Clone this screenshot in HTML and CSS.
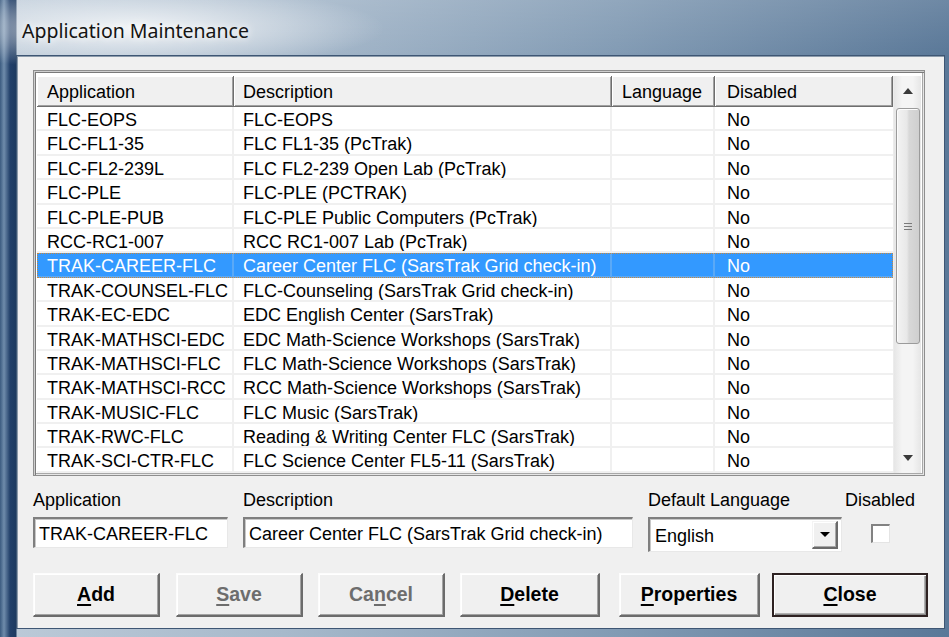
FILE: index.html
```html
<!DOCTYPE html>
<html lang="en">
<head>
<meta charset="utf-8">
<title>Application Maintenance</title>
<link rel="stylesheet" href="styles.css">
</head>
<body>
<div class="window">
  <div class="titlebar"><span class="title">Application Maintenance</span></div>
  <div class="client">
    <div class="listview">
      <div class="lv-main">
        <div class="lv-header">
          <div class="hcell c-app">Application</div>
          <div class="hcell c-desc">Description</div>
          <div class="hcell c-lang">Language</div>
          <div class="hcell c-dis">Disabled</div>
        </div>
        <div class="lv-rows">
          <div class="row"><div class="cell c-app">FLC-EOPS</div><div class="cell c-desc">FLC-EOPS</div><div class="cell c-lang"></div><div class="cell c-dis">No</div></div>
          <div class="row"><div class="cell c-app">FLC-FL1-35</div><div class="cell c-desc">FLC FL1-35 (PcTrak)</div><div class="cell c-lang"></div><div class="cell c-dis">No</div></div>
          <div class="row"><div class="cell c-app">FLC-FL2-239L</div><div class="cell c-desc">FLC FL2-239 Open Lab (PcTrak)</div><div class="cell c-lang"></div><div class="cell c-dis">No</div></div>
          <div class="row"><div class="cell c-app">FLC-PLE</div><div class="cell c-desc">FLC-PLE (PCTRAK)</div><div class="cell c-lang"></div><div class="cell c-dis">No</div></div>
          <div class="row"><div class="cell c-app">FLC-PLE-PUB</div><div class="cell c-desc">FLC-PLE Public Computers (PcTrak)</div><div class="cell c-lang"></div><div class="cell c-dis">No</div></div>
          <div class="row"><div class="cell c-app">RCC-RC1-007</div><div class="cell c-desc">RCC RC1-007 Lab (PcTrak)</div><div class="cell c-lang"></div><div class="cell c-dis">No</div></div>
          <div class="row selected"><div class="cell c-app">TRAK-CAREER-FLC</div><div class="cell c-desc">Career Center FLC (SarsTrak Grid check-in)</div><div class="cell c-lang"></div><div class="cell c-dis">No</div></div>
          <div class="row"><div class="cell c-app">TRAK-COUNSEL-FLC</div><div class="cell c-desc">FLC-Counseling (SarsTrak Grid check-in)</div><div class="cell c-lang"></div><div class="cell c-dis">No</div></div>
          <div class="row"><div class="cell c-app">TRAK-EC-EDC</div><div class="cell c-desc">EDC English Center (SarsTrak)</div><div class="cell c-lang"></div><div class="cell c-dis">No</div></div>
          <div class="row"><div class="cell c-app">TRAK-MATHSCI-EDC</div><div class="cell c-desc">EDC Math-Science Workshops (SarsTrak)</div><div class="cell c-lang"></div><div class="cell c-dis">No</div></div>
          <div class="row"><div class="cell c-app">TRAK-MATHSCI-FLC</div><div class="cell c-desc">FLC Math-Science Workshops (SarsTrak)</div><div class="cell c-lang"></div><div class="cell c-dis">No</div></div>
          <div class="row"><div class="cell c-app">TRAK-MATHSCI-RCC</div><div class="cell c-desc">RCC Math-Science Workshops (SarsTrak)</div><div class="cell c-lang"></div><div class="cell c-dis">No</div></div>
          <div class="row"><div class="cell c-app">TRAK-MUSIC-FLC</div><div class="cell c-desc">FLC Music (SarsTrak)</div><div class="cell c-lang"></div><div class="cell c-dis">No</div></div>
          <div class="row"><div class="cell c-app">TRAK-RWC-FLC</div><div class="cell c-desc">Reading &amp; Writing Center FLC (SarsTrak)</div><div class="cell c-lang"></div><div class="cell c-dis">No</div></div>
          <div class="row"><div class="cell c-app">TRAK-SCI-CTR-FLC</div><div class="cell c-desc">FLC Science Center FL5-11 (SarsTrak)</div><div class="cell c-lang"></div><div class="cell c-dis">No</div></div>
        </div>
      </div>
      <div class="vscroll">
        <div class="sb-arrow"><svg width="10" height="6" viewBox="0 0 10 6"><path d="M0 6 L5 0 L10 6 Z" fill="#3a3a3a"/></svg></div>
        <div class="sb-track">
          <div class="sb-thumb">
            <svg width="8" height="7" viewBox="0 0 8 7"><path d="M0 0.5H8M0 3.5H8M0 6.5H8" stroke="#7a7a7a" stroke-width="1"/></svg>
          </div>
        </div>
        <div class="sb-arrow"><svg width="10" height="6" viewBox="0 0 10 6"><path d="M0 0 L10 0 L5 6 Z" fill="#3a3a3a"/></svg></div>
      </div>
    </div>

    <div class="editor">
      <div class="field f-app">
        <div class="label">Application</div>
        <div class="textbox">TRAK-CAREER-FLC</div>
      </div>
      <div class="field f-desc">
        <div class="label">Description</div>
        <div class="textbox">Career Center FLC (SarsTrak Grid check-in)</div>
      </div>
      <div class="field f-lang">
        <div class="label">Default Language</div>
        <div class="combo">
          <span class="combo-text">English</span>
          <span class="combo-btn"><svg width="10" height="5" viewBox="0 0 10 5"><path d="M0 0 L10 0 L5 5 Z" fill="#000"/></svg></span>
        </div>
      </div>
      <div class="field f-dis">
        <div class="label">Disabled</div>
        <div class="checkbox"></div>
      </div>
    </div>

    <div class="buttons">
      <div class="btn b-add"><u>A</u>dd</div>
      <div class="btn b-save disabled"><u>S</u>ave</div>
      <div class="btn b-cancel disabled">Ca<u>n</u>cel</div>
      <div class="btn b-delete"><u>D</u>elete</div>
      <div class="btn b-props"><u>P</u>roperties</div>
      <div class="btn b-close default"><u>C</u>lose</div>
    </div>
  </div>
</div>
</body>
</html>
```

FILE: styles.css
```css
* { box-sizing: border-box; }

html, body {
  margin: 0;
  padding: 0;
}

body {
  width: 949px;
  height: 637px;
  overflow: hidden;
  background: #27466b;
  font-family: "Liberation Sans", Arial, sans-serif;
  font-size: 18px;
  color: #000;
}

/* Aero glass window frame */
.window {
  width: 949px;
  height: 637px;
  display: flex;
  flex-direction: column;
  background:
    radial-gradient(ellipse 250px 42px at 135px 28px, rgba(255,255,255,0.8), rgba(255,255,255,0) 100%),
    linear-gradient(90deg, #3b5b80 0px, #6f8cab 4px, #22406a 10px, #1d3a60 16px, rgba(0,0,0,0) 17px),
    linear-gradient(180deg, rgba(255,255,255,0.12), rgba(255,255,255,0) 55px),
    linear-gradient(90deg, #bccad8 0%, #a7b9cb 30%, #829bb4 65%, #5a7898 100%);
}

.titlebar {
  height: 55px;
  flex: none;
  padding: 17px 0 0 22px;
}

.title {
  font-family: "Noto Sans", "Open Sans", sans-serif;
  font-size: 19.5px;
  color: #141414;
  text-shadow: 0 0 6px rgba(255,255,255,0.9), 0 0 12px rgba(255,255,255,0.8);
}

.client {
  flex: 1;
  margin: 0 4px 8px 16px;
  background: #f0f0f0;
  border: 1px solid #3e5674;
  box-shadow: inset 1px 1px 0 #8c9bab;
  padding: 14px 0 0 16px;
  display: flex;
  flex-direction: column;
}

/* ---------- list view ---------- */
.listview {
  width: 892px;
  height: 406px;
  display: flex;
  background: #fff;
  border: 1px solid #8e8e8e;
  box-shadow: inset 1px 1px 0 #cfcfcf, inset 2px 2px 0 #7a7a7a, inset -1px -1px 0 #e6e6e6, inset -2px -2px 0 #a8a8a8;
  padding: 5px 3px 2px 3px;
}

.lv-main {
  width: 856px;
  display: flex;
  flex-direction: column;
}

.lv-header {
  display: flex;
  height: 31px;
  flex: none;
}

.hcell {
  height: 31px;
  background: #f0f0f0;
  border-right: 1px solid #6e6e6e;
  border-bottom: 1px solid #6e6e6e;
  box-shadow: inset 1px 1px 0 #fff, inset -1px -1px 0 #a0a0a0;
  line-height: 30px;
  padding-top: 1px;
  white-space: nowrap;
  overflow: hidden;
}

.c-app  { width: 197px; padding-left: 10px; }
.c-desc { width: 378px; padding-left: 9px; }
.c-lang { width: 103px; padding-left: 10px; }
.c-dis  { width: 178px; padding-left: 12px; }

.lv-rows {
  display: flex;
  flex-direction: column;
}

.row {
  display: flex;
  height: 24.4px;
}

.cell {
  height: 24.4px;
  line-height: 24px;
  padding-top: 1px;
  white-space: nowrap;
  overflow: hidden;
  border-right: 2px solid #f0f0f0;
  border-bottom: 2px solid #f0f0f0;
}

.cell.c-dis { border-right: none; }

.row.selected {
  background: #3399ff;
  color: #fff;
  outline: 1px dotted #c8873c;
  outline-offset: -1px;
}

.row.selected .cell { border-color: #5aa9f7; }

/* ---------- vertical scroll bar ---------- */
.vscroll {
  width: 28px;
  display: flex;
  flex-direction: column;
  background: linear-gradient(90deg, #e6e6e6, #f4f4f4 30%, #f4f4f4 70%, #e6e6e6);
  border-left: 1px solid #ececec;
}

.sb-arrow {
  height: 30px;
  flex: none;
  display: flex;
  align-items: center;
  justify-content: center;
}

.sb-track {
  flex: 1;
  padding: 2px 1px 0 2px;
}

.sb-thumb {
  height: 236px;
  border: 1px solid #9b9b9b;
  border-radius: 3px;
  background: linear-gradient(90deg, #f3f3f3 0%, #e8e8e8 45%, #d8d8d8 55%, #cfcfcf 100%);
  box-shadow: inset 1px 1px 0 #fcfcfc;
  display: flex;
  align-items: center;
  justify-content: center;
}

/* ---------- edit fields ---------- */
.editor {
  display: flex;
  margin-top: 14px;
}

.field { display: flex; flex-direction: column; }
.f-app  { width: 195px; }
.f-desc { width: 390px; margin-left: 15px; }
.f-lang { width: 194px; margin-left: 15px; }
.f-dis  { margin-left: 2px; align-items: center; width: 72px; }

.label {
  height: 22px;
  line-height: 20px;
  white-space: nowrap;
  margin-bottom: 5px;
}

.textbox, .combo {
  height: 31px;
  background: #fff;
  border-style: solid;
  border-width: 2px 1px 1px 2px;
  border-color: #7f7f7f #e8e8e8 #e8e8e8 #7f7f7f;
  box-shadow: inset 1px 1px 0 #c8c8c8;
  line-height: 27px;
  padding: 2px 0 0 4px;
  white-space: nowrap;
  overflow: hidden;
}

.combo {
  height: 35px;
  display: flex;
  align-items: center;
  padding: 0 3px 0 5px;
  line-height: normal;
}

.combo-text { flex: 1; padding-top: 2px; }

.combo-btn {
  width: 26px;
  height: 28px;
  background: #f0f0f0;
  border-style: solid;
  border-width: 1px 2px 2px 1px;
  border-color: #f4f4f4 #6a6a6a #6a6a6a #f4f4f4;
  box-shadow: inset 1px 1px 0 #fff, inset -1px -1px 0 #a8a8a8;
  display: flex;
  align-items: center;
  justify-content: center;
}

.checkbox {
  width: 19px;
  height: 19px;
  margin-top: 7px;
  background: #fff;
  border-style: solid;
  border-width: 2px 1px 1px 2px;
  border-color: #828282 #e4e4e4 #e4e4e4 #828282;
}

/* ---------- command buttons ---------- */
.buttons {
  display: flex;
  margin-top: 21px;
}

.btn {
  height: 44px;
  background: #f0f0f0;
  border-style: solid;
  border-width: 1px 2px 2px 1px;
  border-color: #fcfcfc #6b6b6b #6b6b6b #fcfcfc;
  box-shadow: inset 1px 1px 0 #fff, inset -1px -1px 0 #a3a3a3;
  font-weight: bold;
  font-size: 19.5px;
  display: flex;
  align-items: center;
  justify-content: center;
  padding-bottom: 1px;
  white-space: nowrap;
}

.btn u { text-decoration-thickness: 2px; text-underline-offset: 3px; }

.btn.disabled { color: #6d6d6d; }

.b-add    { width: 127px; }
.b-save   { width: 127px; margin-left: 16px; }
.b-cancel { width: 127px; margin-left: 15px; }
.b-delete { width: 140px; margin-left: 15px; }
.b-props  { width: 141px; margin-left: 19px; }
.b-close  { width: 156px; margin-left: 12px; }

.btn.default {
  border: 2px solid #2e2222;
  box-shadow: inset 1px 1px 0 #fff, inset -1px -1px 0 #8a8a8a, inset -2px -2px 0 #b0b0b0;
}
```
